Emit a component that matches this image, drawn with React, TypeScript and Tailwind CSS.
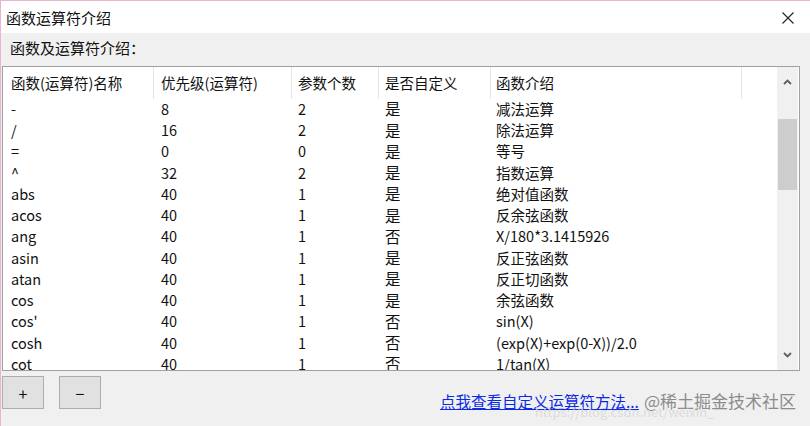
import React from "react";

const rows: [string, string, string, string, string][] = [
  ["-", "8", "2", "是", "减法运算"],
  ["/", "16", "2", "是", "除法运算"],
  ["=", "0", "0", "是", "等号"],
  ["^", "32", "2", "是", "指数运算"],
  ["abs", "40", "1", "是", "绝对值函数"],
  ["acos", "40", "1", "是", "反余弦函数"],
  ["ang", "40", "1", "否", "X/180*3.1415926"],
  ["asin", "40", "1", "是", "反正弦函数"],
  ["atan", "40", "1", "是", "反正切函数"],
  ["cos", "40", "1", "是", "余弦函数"],
  ["cos'", "40", "1", "否", "sin(X)"],
  ["cosh", "40", "1", "否", "(exp(X)+exp(0-X))/2.0"],
  ["cot", "40", "1", "否", "1/tan(X)"],
];

export default function App() {
  return (
    <div className="w-[810px] h-[426px] overflow-hidden bg-[#f0f0f0] border-l border-t border-[#e9b4cf] flex flex-col font-['Noto_Sans_CJK_SC',sans-serif] text-[#111111]">
      {/* title bar */}
      <div className="h-[32px] shrink-0 bg-white flex items-center justify-between pl-[5px] pr-[16px]">
        <span className="text-[15px] leading-none">函数运算符介绍</span>
        <svg width="12" height="12" viewBox="0 0 12 12" className="mt-[1px]">
          <path d="M0.5 0.5 L11.5 11.5 M11.5 0.5 L0.5 11.5" stroke="#222" strokeWidth="1.1" fill="none" />
        </svg>
      </div>
      {/* label */}
      <div className="h-[33px] shrink-0 flex items-center pl-[9px] pb-[4px]">
        <span className="text-[15px] leading-none">函数及运算符介绍：</span>
      </div>
      {/* list */}
      <div className="ml-[1px] w-[798px] h-[305px] shrink-0 border border-[#a0a0a0] bg-white flex">
        <div className="flex-1 overflow-hidden text-[14.5px]">
          <div className="h-[31.5px] flex items-center">
            <div className="w-[151px] h-full flex items-center pl-[8px] border-r border-[#e5e5e5]">函数(运算符)名称</div>
            <div className="w-[138px] h-full flex items-center pl-[7px] border-r border-[#e5e5e5]">优先级(运算符)</div>
            <div className="w-[87px] h-full flex items-center pl-[6px] border-r border-[#e5e5e5]">参数个数</div>
            <div className="w-[112px] h-full flex items-center pl-[6px] border-r border-[#e5e5e5]">是否自定义</div>
            <div className="w-[251px] h-full flex items-center pl-[5px] border-r border-[#e5e5e5]">函数介绍</div>
          </div>
          {rows.map((r, i) => (
            <div key={i} className="h-[21.25px] flex items-center leading-none">
              <div className="w-[151px] pl-[8px]">{r[0]}</div>
              <div className="w-[138px] pl-[7px]">{r[1]}</div>
              <div className="w-[87px] pl-[6px]">{r[2]}</div>
              <div className="w-[112px] pl-[6px] text-[15.5px]">{r[3]}</div>
              <div className="w-[251px] pl-[5px]">{r[4]}</div>
            </div>
          ))}
        </div>
        {/* scrollbar */}
        <div className="w-[21px] mr-[1px] bg-[#f0f0f0] flex flex-col items-center">
          <div className="h-[27px] w-full flex items-center justify-center pt-[2px]">
            <svg width="9" height="6" viewBox="0 0 9 6">
              <path d="M1 5 L4.5 1.5 L8 5" stroke="#606060" strokeWidth="1.8" fill="none" />
            </svg>
          </div>
          <div className="mt-[25px] w-[19px] h-[71px] bg-[#cdcdcd]" />
          <div className="flex-1" />
          <div className="h-[27px] w-full flex items-center justify-center pb-[3px]">
            <svg width="9" height="6" viewBox="0 0 9 6">
              <path d="M1 1 L4.5 4.5 L8 1" stroke="#606060" strokeWidth="1.8" fill="none" />
            </svg>
          </div>
        </div>
      </div>
      {/* bottom */}
      <div className="flex-1 flex items-start pt-[5px] pl-[1px] relative">
        <button className="w-[42px] h-[33px] border border-[#adadad] bg-[#e1e1e1] text-[16px] leading-none flex items-center justify-center">+</button>
        <button className="ml-[15px] w-[42px] h-[33px] border border-[#adadad] bg-[#e1e1e1] text-[16px] leading-none flex items-center justify-center">−</button>
        <div className="ml-auto mr-[14px] mt-[16px] flex items-baseline relative">
          <span className="text-[15.5px] text-[#0a2be6] underline leading-none">点我查看自定义运算符方法...</span>
          <span className="ml-[5px] text-[17px] text-[#8c8c8c] leading-none">@稀土掘金技术社区</span>
          <span className="absolute left-[95px] top-[13px] text-[13px] text-[#dcdcdc] leading-none whitespace-nowrap">https://blog.csdn.net/weixin_</span>
        </div>
      </div>
    </div>
  );
}
